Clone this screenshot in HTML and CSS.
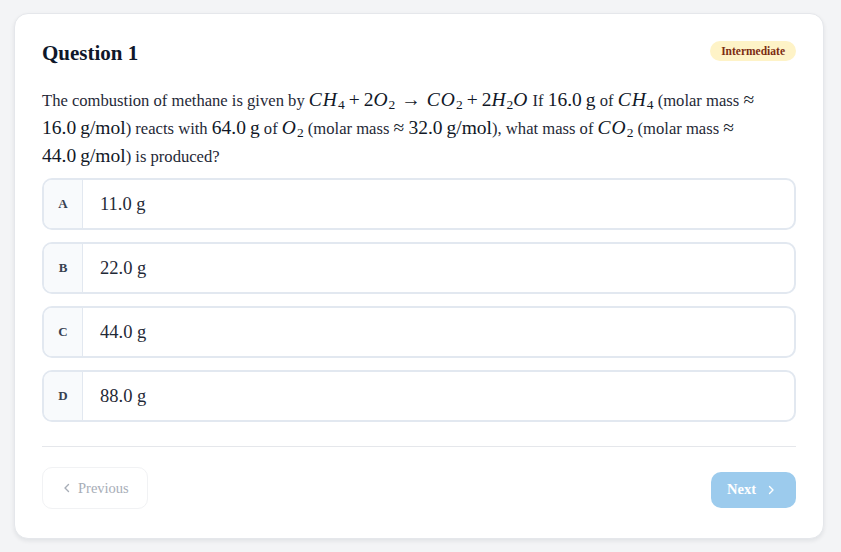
FILE: index.html
```html
<html>
<head>
    <link rel="stylesheet" href="styles.css">
</head>
<body>
<div class="card">
    <div class="head">
        <h2 class="title">Question 1</h2>
        <span class="badge">Intermediate</span>
    </div>

    <p class="question">The combustion of methane is given by <span class="m"><i>CH</i><sub>4</sub><b class="op">+</b>2<i>O</i><sub>2</sub><b class="rel">→</b><i>CO</i><sub>2</sub><b class="op">+</b>2<i>H</i><sub>2</sub><i>O</i></span> If <span class="m">16.0<u class="sp"></u>g</span> of <span class="m"><i>CH</i><sub>4</sub></span> (molar mass <span class="m">≈</span> <span class="m">16.0<u class="sp"></u>g/mol</span>) reacts with <span class="m">64.0<u class="sp"></u>g</span> of <span class="m"><i>O</i><sub>2</sub></span> (molar mass <span class="m">≈</span> <span class="m">32.0<u class="sp"></u>g/mol</span>), what mass of <span class="m"><i>CO</i><sub>2</sub></span> (molar mass <span class="m">≈</span> <span class="m">44.0<u class="sp"></u>g/mol</span>) is produced?</p>

    <div class="options">
        <div class="option"><span class="letter">A</span><span class="answer">11.0 g</span></div>
        <div class="option"><span class="letter">B</span><span class="answer">22.0 g</span></div>
        <div class="option"><span class="letter">C</span><span class="answer">44.0 g</span></div>
        <div class="option"><span class="letter">D</span><span class="answer">88.0 g</span></div>
    </div>

    <div class="nav">
        <button class="btn prev" disabled>
            <svg width="10" height="10" viewBox="0 0 10 10"><path d="M6.5 1.5 L3 5 L6.5 8.5" fill="none" stroke="currentColor" stroke-width="1.4" stroke-linecap="round" stroke-linejoin="round"/></svg>
            Previous
        </button>
        <button class="btn next" disabled>
            Next
            <svg width="10" height="10" viewBox="0 0 10 10"><path d="M3.5 1.5 L7 5 L3.5 8.5" fill="none" stroke="currentColor" stroke-width="1.4" stroke-linecap="round" stroke-linejoin="round"/></svg>
        </button>
    </div>
</div>
</body>
</html>
```

FILE: styles.css
```css
body {
    margin:0;
    background:#f3f4f6;
    font-family:"Liberation Serif", "DejaVu Serif", serif;
    color:#1f2937;
}

.card {
    width:810px;
    margin:13px 0 0 14px;
    box-sizing:border-box;
    background:#fff;
    border:1px solid #e5e7eb;
    border-radius:14px;
    box-shadow:0 2px 4px rgba(15,23,42,0.08);
    padding:25px 27px 29px 27px;
}

.head {
    display:flex;
    justify-content:space-between;
    align-items:center;
}

.title {
    margin:0;
    font-size:21px;
    line-height:28px;
    font-weight:bold;
    color:#0f172a;
}

.badge {
    background:#fef3c7;
    color:#7c2d12;
    font-size:11.5px;
    font-weight:bold;
    padding:3px 11px;
    border-radius:10px;
    line-height:14px;
    margin-top:-5px;
}

.question {
    margin:19px 0 0 0;
    font-size:16.6px;
    line-height:27px;
    color:#1f2937;
}

.m {
    font-family:"Liberation Serif", serif;
    font-size:19.5px;
    color:#111827;
    white-space:nowrap;
}

.m i {
    font-style:italic;
    letter-spacing:1px;
}

.m b {
    font-weight:normal;
}

.m .op {
    margin:0 4px;
}

.m .rel {
    margin:0 6px;
}

.m .sp {
    display:inline-block;
    width:4px;
}

.m sub {
    font-size:13.5px;
    line-height:0;
    vertical-align:-3px;
}

.options {
    display:flex;
    flex-direction:column;
    gap:12px;
    margin-top:8px;
}

.option {
    display:flex;
    align-items:stretch;
    height:52px;
    box-sizing:border-box;
    border:2px solid #e2e8f0;
    border-radius:10px;
    overflow:hidden;
}

.letter {
    width:38px;
    flex:none;
    background:#f8fafc;
    border-right:1px solid #e2e8f0;
    display:flex;
    align-items:center;
    justify-content:center;
    font-size:13px;
    font-weight:bold;
    color:#374151;
}

.answer {
    display:flex;
    align-items:center;
    padding-left:17px;
    font-size:18.5px;
    color:#1f2937;
}

.nav {
    margin-top:24px;
    border-top:1px solid #e5e7eb;
    padding-top:20px;
    display:flex;
    justify-content:space-between;
    align-items:center;
}

.btn {
    font-family:"Liberation Serif", serif;
    display:flex;
    align-items:center;
    gap:6px;
    border-radius:10px;
    font-size:14.5px;
}

.prev {
    background:#fff;
    border:1px solid #f1f2f4;
    color:#a7adb7;
    height:42px;
    padding:0 18px 0 19px;
}

.next {
    background:#9ccbed;
    border:0;
    color:#fff;
    font-weight:bold;
    height:36px;
    padding:0 20px 0 16px;
    gap:10px;
    margin-top:3px;
}
```
